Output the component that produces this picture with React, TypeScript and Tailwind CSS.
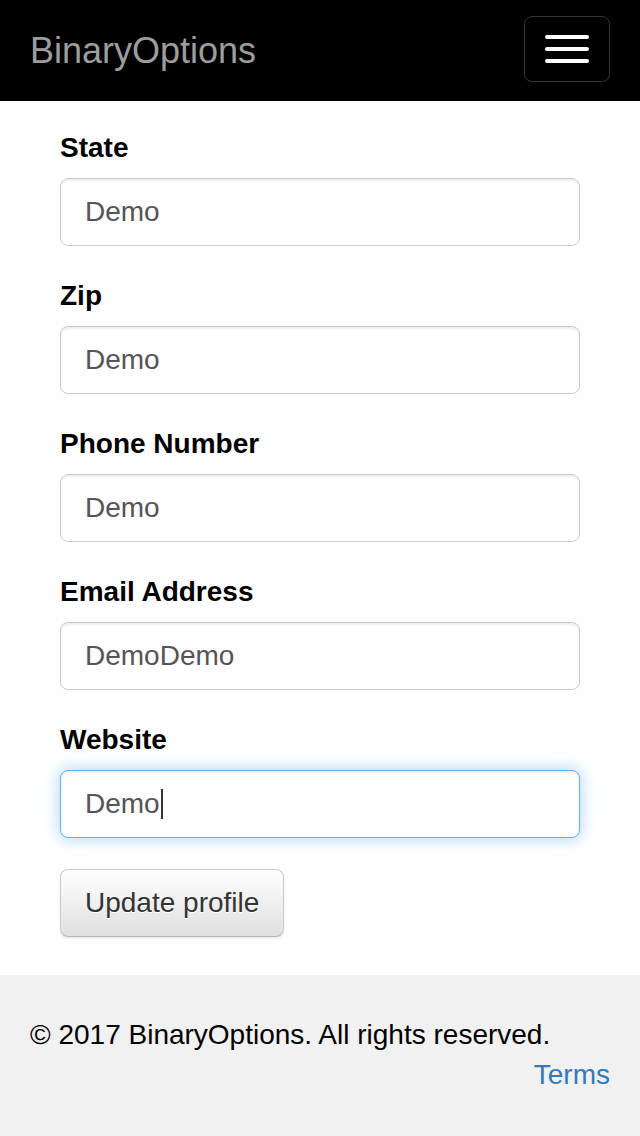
const fields = [
  { label: "State", value: "Demo" },
  { label: "Zip", value: "Demo" },
  { label: "Phone Number", value: "Demo" },
  { label: "Email Address", value: "DemoDemo" },
  { label: "Website", value: "Demo", focused: true },
];

const Field = ({ label, value, focused }: { label: string; value: string; focused?: boolean }) => {
  return (
    <div className="mb-[30px]">
      <div className="font-bold text-black leading-[40px] mb-[10px]">{label}</div>
      <div
        className={`h-[68px] flex items-center px-[24px] rounded-[8px] border bg-white text-[#555] ${
          focused
            ? "border-[#66afe9] shadow-[inset_0_2px_2px_rgba(0,0,0,0.075),0_0_16px_rgba(102,175,233,0.6)]"
            : "border-[#ccc] shadow-[inset_0_2px_2px_rgba(0,0,0,0.075)]"
        }`}
      >
        <span>{value}</span>
        {focused && <span className="w-[2px] h-[30px] bg-[#333] ml-[1px]" />}
      </div>
    </div>
  );
};

export default function App() {
  return (
    <div className="w-[640px] min-h-[1136px] flex flex-col bg-white text-[28px] font-['Liberation_Sans',Arial,sans-serif]">
      <div className="h-[101px] bg-black flex items-start justify-between px-[30px]">
        <span className="text-[36px] leading-[101px] text-[#9d9d9d]">BinaryOptions</span>
        <div className="mt-[16px] w-[86px] h-[66px] border border-[#333] rounded-[8px] flex flex-col items-center justify-center gap-[8px]">
          <span className="w-[44px] h-[4px] rounded-[2px] bg-white" />
          <span className="w-[44px] h-[4px] rounded-[2px] bg-white" />
          <span className="w-[44px] h-[4px] rounded-[2px] bg-white" />
        </div>
      </div>

      <div className="px-[60px] pt-[27px]">
        {fields.map((f) => (
          <Field key={f.label} {...f} />
        ))}
        <div className="mt-[1px] mb-[38px] inline-flex h-[68px] items-center px-[24px] rounded-[8px] border border-[#ccc] border-b-[#b8b8b8] bg-gradient-to-b from-white to-[#e0e0e0] text-[#333] [text-shadow:0_1px_0_#fff] shadow-[0_1px_2px_rgba(0,0,0,0.12)]">
          Update profile
        </div>
      </div>

      <div className="flex-1 bg-[#f1f1f1] px-[30px] pt-[40px] pb-[41px] text-black">
        <div className="leading-[40px]">© 2017 BinaryOptions. All rights reserved.</div>
        <div className="leading-[40px] text-right text-[#337ab7]">Terms</div>
      </div>
    </div>
  );
}
